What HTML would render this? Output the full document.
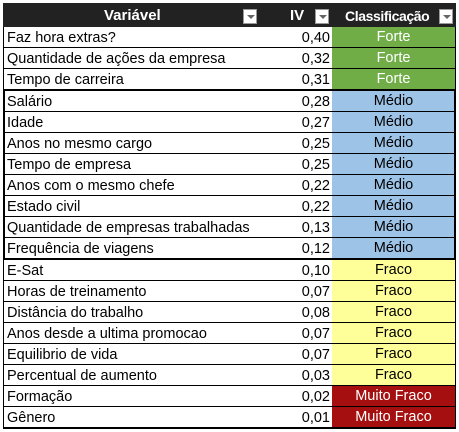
<!DOCTYPE html><html><head><meta charset="utf-8"><style>
body{margin:0;width:459px;height:432px;background:#fff;position:relative;overflow:hidden;font-family:"Liberation Sans",sans-serif;font-size:14.5px;color:#000}
.r{position:absolute;left:4px;width:451px;height:21px;box-sizing:border-box;border-bottom:1px solid #000}
.r span{position:absolute;top:3px;line-height:17px}
.a{left:3px}.b{right:125px}
.c{position:absolute;left:328px;top:0;width:123px;height:20px;text-align:center;line-height:21px}
.F{background:#70AD47;color:#fff}.M{background:#9DC3E6}.Y{background:#FFFF99}.R{background:#A50F0F;color:#fff}
.g{position:absolute;box-sizing:border-box}
.dd{position:absolute;top:9px;width:14px;height:15px;background:#fff;border:1px solid #999;box-sizing:border-box}
.dd:after{content:"";position:absolute;left:3px;top:5px;border-left:4px solid transparent;border-right:4px solid transparent;border-top:4px solid #666}
.h{position:absolute;top:3px;height:24px;color:#fff;font-weight:bold;line-height:26px;font-size:15px}
</style></head><body>
<div style="position:absolute;left:3px;top:3px;width:453px;height:24px;background:#222"></div>
<div class="h" style="left:104px">Variável</div>
<div class="h" style="left:290px">IV</div>
<div class="h" style="left:345px;font-size:14px;letter-spacing:-0.4px">Classificação</div>
<div class="dd" style="left:243px"></div>
<div class="dd" style="left:315px"></div>
<div class="dd" style="left:439px"></div>

<div class="r" style="top:27px"><span class="a">Faz hora extras?</span><span class="b">0,40</span><div class="c F">Forte</div></div>
<div class="r" style="top:48px"><span class="a">Quantidade de ações da empresa</span><span class="b">0,32</span><div class="c F">Forte</div></div>
<div class="r" style="top:69px"><span class="a">Tempo de carreira</span><span class="b">0,31</span><div class="c F">Forte</div></div>
<div class="r" style="top:91px"><span class="a">Salário</span><span class="b">0,28</span><div class="c M">Médio</div></div>
<div class="r" style="top:112px"><span class="a">Idade</span><span class="b">0,27</span><div class="c M">Médio</div></div>
<div class="r" style="top:133px"><span class="a">Anos no mesmo cargo</span><span class="b">0,25</span><div class="c M">Médio</div></div>
<div class="r" style="top:154px"><span class="a">Tempo de empresa</span><span class="b">0,25</span><div class="c M">Médio</div></div>
<div class="r" style="top:175px"><span class="a">Anos com o mesmo chefe</span><span class="b">0,22</span><div class="c M">Médio</div></div>
<div class="r" style="top:196px"><span class="a">Estado civil</span><span class="b">0,22</span><div class="c M">Médio</div></div>
<div class="r" style="top:217px"><span class="a">Quantidade de empresas trabalhadas</span><span class="b">0,13</span><div class="c M">Médio</div></div>
<div class="r" style="top:238px"><span class="a">Frequência de viagens</span><span class="b">0,12</span><div class="c M">Médio</div></div>
<div class="r" style="top:260px"><span class="a">E-Sat</span><span class="b">0,10</span><div class="c Y">Fraco</div></div>
<div class="r" style="top:281px"><span class="a">Horas de treinamento</span><span class="b">0,07</span><div class="c Y">Fraco</div></div>
<div class="r" style="top:302px"><span class="a">Distância do trabalho</span><span class="b">0,08</span><div class="c Y">Fraco</div></div>
<div class="r" style="top:323px"><span class="a">Anos desde a ultima promocao</span><span class="b">0,07</span><div class="c Y">Fraco</div></div>
<div class="r" style="top:344px"><span class="a">Equilibrio de vida</span><span class="b">0,07</span><div class="c Y">Fraco</div></div>
<div class="r" style="top:365px"><span class="a">Percentual de aumento</span><span class="b">0,03</span><div class="c Y">Fraco</div></div>
<div class="r" style="top:386px"><span class="a">Formação</span><span class="b">0,02</span><div class="c R">Muito Fraco</div></div>
<div class="r" style="top:407px"><span class="a">Gênero</span><span class="b">0,01</span><div class="c R">Muito Fraco</div></div>

<div class="g" style="left:3px;top:27px;width:453px;height:64px;border:1px solid #000;border-bottom:2px solid #000;border-top:none"></div>
<div class="g" style="left:3px;top:89px;width:453px;height:171px;border:2px solid #000"></div>
<div class="g" style="left:3px;top:259px;width:453px;height:170px;border:1px solid #000;border-top:none"></div>
</body></html>
